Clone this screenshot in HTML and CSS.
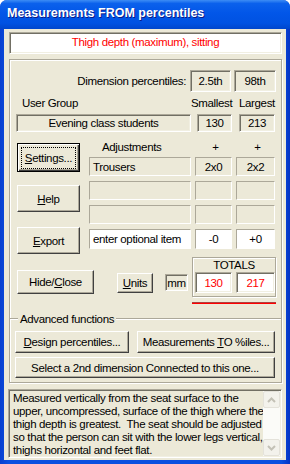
FILE: index.html
```html
<!DOCTYPE html>
<html lang="en">
<head>
    <meta charset="UTF-8">
    <meta name="viewport" content="width=device-width, initial-scale=1.0">
    <title>Measurements FROM percentiles</title>
    <link rel="stylesheet" href="styles.css">
</head>
<body>
    <div class="window">
        <div class="titlebar">
            <span class="title">Measurements FROM percentiles</span>
        </div>

        <div class="client">
            <!-- Dimension name -->
            <div class="dim-name">Thigh depth (maximum), sitting</div>

            <div class="group">
                <div class="row-pct">
                    <span class="pct-label">Dimension percentiles:</span>
                    <span class="field pct-lo">2.5th</span>
                    <span class="field pct-hi">98th</span>
                </div>

                <div class="row-heads">
                    <span class="head-group">User Group</span>
                    <span class="head-small">Smallest</span>
                    <span class="head-large">Largest</span>
                </div>

                <div class="row-user">
                    <span class="field user-name">Evening class students</span>
                    <span class="field user-lo">130</span>
                    <span class="field user-hi">213</span>
                </div>

                <div class="mid">
                    <div class="side-buttons">
                        <button class="btn btn-default btn-side"><span class="focus"><span><u>S</u>ettings...</span></span></button>
                        <button class="btn btn-side btn-help"><span><u>H</u>elp</span></button>
                        <button class="btn btn-side btn-export"><span><u>E</u>xport</span></button>
                    </div>

                    <!-- Adjustments table -->
                    <div class="adjust">
                        <div class="adj-head">
                            <span class="adj-title">Adjustments</span>
                            <span class="adj-plus col-a">+</span>
                            <span class="adj-plus col-b">+</span>
                        </div>
                        <div class="adj-row">
                            <span class="cell cell-name">Trousers</span>
                            <span class="cell col-a">2x0</span>
                            <span class="cell col-b">2x2</span>
                        </div>
                        <div class="adj-row">
                            <span class="cell cell-name"></span>
                            <span class="cell col-a"></span>
                            <span class="cell col-b"></span>
                        </div>
                        <div class="adj-row">
                            <span class="cell cell-name"></span>
                            <span class="cell col-a"></span>
                            <span class="cell col-b"></span>
                        </div>
                        <div class="adj-row adj-edit">
                            <span class="cell edit cell-name">enter optional item</span>
                            <span class="cell edit col-a">-0</span>
                            <span class="cell edit col-b">+0</span>
                        </div>
                    </div>
                </div>

                <div class="bottom">
                    <button class="btn btn-hide"><span>Hide/<u>C</u>lose</span></button>
                    <button class="btn btn-units"><span><u>U</u>nits</span></button>
                    <span class="field unit-box">mm</span>
                    <div class="totals-wrap">
                        <div class="totals">
                            <div class="totals-title">TOTALS</div>
                            <div class="totals-row">
                                <span class="total col-a">130</span>
                                <span class="total col-b">217</span>
                            </div>
                        </div>
                        <div class="red-rule"></div>
                    </div>
                </div>

                <div class="adv-sep"><span class="adv-label">Advanced functions</span></div>

                <div class="adv-row">
                    <button class="btn btn-design"><span><u>D</u>esign percentiles...</span></button>
                    <button class="btn btn-meas"><span>Measurements <u>T</u>O %iles...</span></button>
                </div>
                <div class="adv-row adv-row-2">
                    <button class="btn btn-select"><span>Select a 2nd dimension Connected to this one...</span></button>
                </div>
            </div>

            <!-- Description of the dimension -->
            <div class="desc">
                <div class="desc-text">Measured vertically from the seat surface to the<br>upper, uncompressed, surface of the thigh where the<br>thigh depth is greatest.&nbsp; The seat should be adjusted<br>so that the person can sit with the lower legs vertical,<br>thighs horizontal and feet flat.</div>
                <div class="scrollbar">
                    <span class="sb-btn">
                        <svg width="9" height="6" viewBox="0 0 9 6"><path d="M1 5 L4.5 1.5 L8 5" fill="none" stroke="#c3c1b6" stroke-width="2"/></svg>
                    </span>
                    <span class="sb-track"></span>
                    <span class="sb-btn">
                        <svg width="9" height="6" viewBox="0 0 9 6"><path d="M1 1 L4.5 4.5 L8 1" fill="none" stroke="#c3c1b6" stroke-width="2"/></svg>
                    </span>
                </div>
            </div>
        </div>
    </div>
</body>
</html>
```

FILE: styles.css
```css
* {
    box-sizing: border-box;
}
body {
    margin: 0;
    background-color: #ffffff;
    font-family: "Liberation Sans", Arial, sans-serif;
    font-size: 11.5px;
    letter-spacing: -0.35px;
    color: #000000;
}
.window {
    width: 290px;
    height: 464px;
    background: linear-gradient(to right, #0840d0, #0a4fe0 3%, #0a4fe0 97%, #0634c4);
    border-radius: 7px 7px 0 0;
    overflow: hidden;
}
.titlebar {
    height: 29px;
    padding: 6px 0 0 7px;
    background: linear-gradient(to bottom, #3d8df5 0, #0b61ec 12%, #0256e8 45%, #0052e2 80%, #0046cc 100%);
}
.title {
    font-weight: bold;
    font-size: 12.5px;
    letter-spacing: 0;
    color: #ffffff;
    text-shadow: 1px 1px 0 #0b1a86;
}
.client {
    margin: 0 4px 4px 4px;
    height: 431px;
    background-color: #ece9d8;
    overflow: hidden;
    padding-top: 3px;
}

/* sunken read-only boxes */
.field {
    display: flex;
    align-items: center;
    justify-content: center;
    background-color: #ece9d8;
    border: 1px solid;
    border-color: #aca899 #ffffff #ffffff #aca899;
    box-shadow: inset 1px 1px 0 #716f64, inset -1px -1px 0 #f1efe2;
}
.dim-name {
    margin-left: 5px;
    width: 273px;
    height: 22px;
    background-color: #ffffff;
    color: #ff0000;
    text-align: center;
    line-height: 19px;
    border: 1px solid;
    border-color: #aca899 #ffffff #ffffff #aca899;
    box-shadow: inset 1px 1px 0 #716f64, inset -1px -1px 0 #f1efe2;
}

/* main group box, etched */
.group {
    margin: 5px 0 0 5px;
    width: 273px;
    height: 324px;
    border: 1px solid #aca899;
    box-shadow: inset 1px 1px 0 #ffffff, 1px 1px 0 #ffffff;
}
.row-pct {
    margin-top: 10px;
    height: 22px;
    display: flex;
    justify-content: flex-end;
    align-items: center;
    padding-right: 5px;
}
.pct-label {
    margin-right: 4px;
}
.pct-lo {
    width: 41px;
    height: 22px;
    margin-right: 3px;
}
.pct-hi {
    width: 42px;
    height: 22px;
}
.row-heads {
    margin-top: 4px;
    height: 14px;
    line-height: 14px;
    display: flex;
}
.head-group {
    margin-left: 12px;
    width: 169px;
}
.head-small {
    width: 48px;
}
.row-user {
    margin-top: 4px;
    height: 18px;
    display: flex;
}
.user-name {
    margin-left: 6px;
    width: 175px;
}
.user-lo {
    margin-left: 6px;
    width: 35px;
}
.user-hi {
    margin-left: 7px;
    width: 36px;
}

/* buttons */
.btn {
    display: flex;
    align-items: center;
    justify-content: center;
    padding: 0;
    font-family: inherit;
    font-size: 11.5px;
    letter-spacing: -0.35px;
    color: #000000;
    background-color: #ece9d8;
    border: 1px solid;
    border-color: #ffffff #404040 #404040 #ffffff;
    box-shadow: inset -1px -1px 0 #aca899;
    white-space: nowrap;
}
.btn-default {
    border: 1px solid #000000;
    box-shadow: inset 1px 1px 0 #ffffff, inset -1px -1px 0 #404040, inset -2px -2px 0 #aca899;
}
.focus {
    display: flex;
    align-items: center;
    justify-content: center;
    width: 55px;
    height: 22px;
    border: 1px dotted #000000;
}

.mid {
    margin-top: 8px;
    display: flex;
}
.side-buttons {
    margin-left: 7px;
    width: 63px;
    padding-top: 3px;
    display: flex;
    flex-direction: column;
}
.btn-side {
    width: 63px;
    height: 27px;
}
.btn-default.btn-side {
    height: 29px;
}
.btn-help {
    margin-top: 13px;
}
.btn-export {
    margin-top: 15px;
}
.adjust {
    margin-left: 9px;
}
.adj-head {
    height: 14px;
    line-height: 14px;
    display: flex;
}
.adj-title {
    width: 102px;
    padding-left: 13px;
}
.adj-plus {
    text-align: center;
    padding-left: 4px;
}
.adj-row {
    margin-top: 5px;
    height: 19px;
    display: flex;
}
.adj-head + .adj-row {
    margin-top: 3px;
}
.adj-edit {
    height: 20px;
}
.cell {
    display: flex;
    align-items: center;
    justify-content: center;
    background-color: #ece9d8;
    border: 1px solid;
    border-color: #aca899 #ffffff #ffffff #aca899;
    white-space: nowrap;
}
.cell-name {
    width: 102px;
    justify-content: flex-start;
    padding-left: 3px;
}
.cell.edit {
    background-color: #ffffff;
}
.col-a {
    margin-left: 4px;
    width: 37px;
}
.col-b {
    margin-left: 4px;
    width: 39px;
}

/* bottom row */
.bottom {
    margin-top: 3px;
    display: flex;
    align-items: flex-start;
}
.btn-hide {
    margin: 13px 0 0 7px;
    width: 77px;
    height: 24px;
}
.btn-units {
    margin: 16px 0 0 23px;
    width: 36px;
    height: 20px;
}
.unit-box {
    margin: 17px 0 0 12px;
    width: 23px;
    height: 17px;
}
.totals-wrap {
    margin-left: 4px;
    width: 84px;
}
.totals {
    height: 40px;
    border: 1px solid #aca899;
    box-shadow: inset 1px 1px 0 #ffffff, 1px 1px 0 #ffffff;
}
.totals-title {
    height: 14px;
    line-height: 14px;
    text-align: center;
}
.totals-row {
    display: flex;
    margin-left: -2px;
}
.total {
    height: 21px;
    display: flex;
    align-items: center;
    justify-content: center;
    color: #ff0000;
    background-color: #ffffff;
    border: 1px solid;
    border-color: #aca899 #ffffff #ffffff #aca899;
    box-shadow: inset 1px 1px 0 #716f64, inset -1px -1px 0 #f1efe2;
}
.totals-row .col-a {
    margin-left: 4px;
}
.red-rule {
    margin-top: 5px;
    height: 2px;
    background-color: #ff0000;
    border-top: 1px solid #b04040;
}

/* advanced functions */
.adv-sep {
    margin-top: 8px;
    height: 14px;
    display: flex;
    align-items: center;
    background: linear-gradient(to bottom, transparent 6px, #aca899 6px, #aca899 7px, #ffffff 7px, #ffffff 8px, transparent 8px);
}
.adv-label {
    margin-left: 8px;
    padding: 0 2px;
    line-height: 14px;
    background-color: #ece9d8;
}
.adv-row {
    margin-top: 5px;
    display: flex;
}
.adv-row-2 {
    margin-top: 4px;
}
.btn-design {
    margin-left: 5px;
    width: 114px;
    height: 22px;
}
.btn-meas {
    margin-left: 8px;
    width: 138px;
    height: 22px;
}
.btn-select {
    margin-left: 5px;
    width: 260px;
    height: 21px;
}

/* description */
.desc {
    margin: 6px 0 0 4px;
    width: 274px;
    height: 69px;
    display: flex;
    border: 1px solid;
    border-color: #aca899 #ffffff #ffffff #aca899;
    box-shadow: inset 1px 1px 0 #716f64, inset -1px -1px 0 #f1efe2;
    padding: 1px;
}
.desc-text {
    flex: 1;
    padding: 1px 0 0 3px;
    line-height: 13px;
    white-space: nowrap;
    overflow: hidden;
}
.scrollbar {
    width: 17px;
    display: flex;
    flex-direction: column;
    background-color: #fbfbf8;
}
.sb-btn {
    width: 17px;
    height: 17px;
    display: flex;
    align-items: center;
    justify-content: center;
    background-color: #f3f2ec;
    border: 1px solid #e4e2da;
    border-radius: 2px;
}
.sb-track {
    flex: 1;
}
```
